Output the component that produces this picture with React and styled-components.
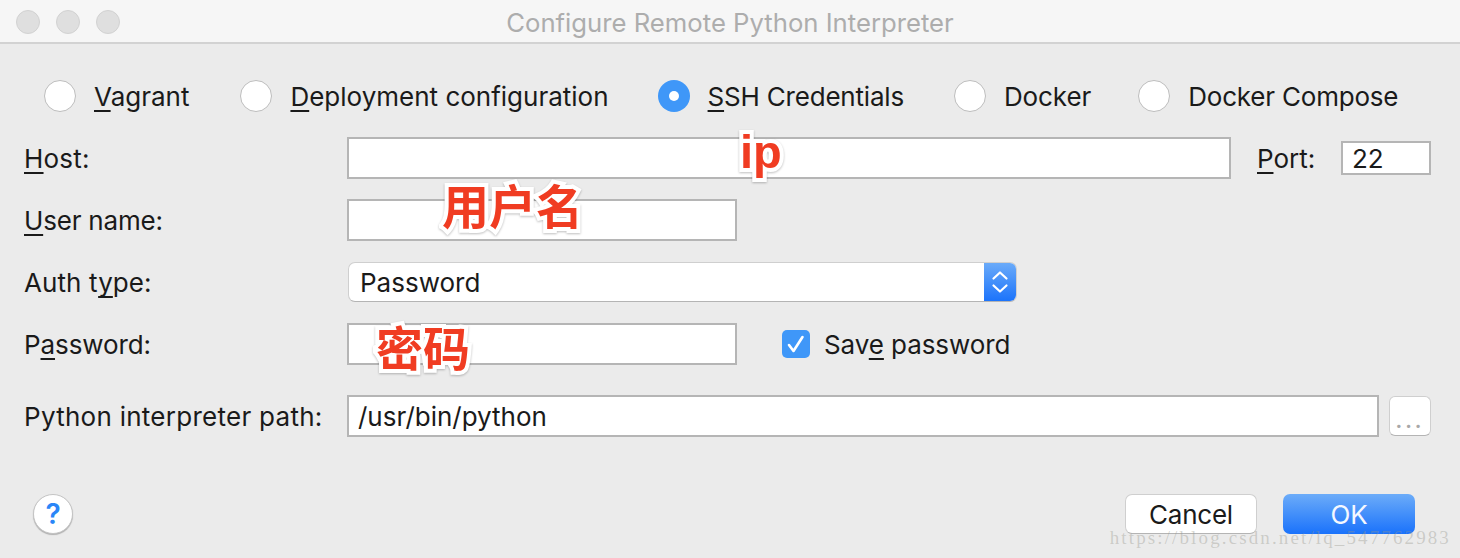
import React from 'react'
import styled, { createGlobalStyle } from 'styled-components'

const GlobalStyle = createGlobalStyle`
  html, body {
    margin: 0;
    padding: 0;
    background: #ebebeb;
  }
  body {
    font-family: Inter, "Noto Sans", "Liberation Sans", sans-serif;
    color: #1a1a1a;
    -webkit-font-smoothing: antialiased;
  }
`

const App = () => (
  <Dialog>
    <GlobalStyle />
    <TitleBar>
      <Lights>
        <Light />
        <Light />
        <Light />
      </Lights>
      <Title>Configure Remote Python Interpreter</Title>
    </TitleBar>
    <Body>
      <RadioRow>
        <RadioItem $gap={51}>
          <Radio />
          <span><Mn>V</Mn>agrant</span>
        </RadioItem>
        <RadioItem $gap={49}>
          <Radio />
          <span><Mn>D</Mn>eployment configuration</span>
        </RadioItem>
        <RadioItem $gap={50} $spacing={-0.2}>
          <Radio $checked />
          <span><Mn>S</Mn>SH Credentials</span>
        </RadioItem>
        <RadioItem $gap={47} $spacing={-0.1}>
          <Radio />
          <span>Docker</span>
        </RadioItem>
        <RadioItem $spacing={-0.2}>
          <Radio />
          <span>Docker Compose</span>
        </RadioItem>
      </RadioRow>

      <Row $top={25}>
        <Label $spacing={0.2}><Mn>H</Mn>ost:</Label>
        <Field $width={884}>
          <Note $left={391} $top={-15} $size={47} $latin>ip</Note>
        </Field>
        <PortLabel><Mn>P</Mn>ort:</PortLabel>
        <PortField>22</PortField>
      </Row>

      <Row $top={20}>
        <Label $spacing={-0.2}><Mn>U</Mn>ser name:</Label>
        <Field $width={390}>
          <Note $left={93} $top={-25} $size={47}>用户名</Note>
        </Field>
      </Row>

      <Row $top={21}>
        <Label $spacing={0.1}>Auth t<Mn>y</Mn>pe:</Label>
        <Select>
          <span>Password</span>
          <SelectArrows>
            <svg width="20" height="28" viewBox="0 0 20 28" fill="none" stroke="#fff" strokeWidth="2.2" strokeLinecap="round" strokeLinejoin="round">
              <path d="M3.5 10.5 L10 4.5 L16.5 10.5" />
              <path d="M3.5 17.5 L10 23.5 L16.5 17.5" />
            </svg>
          </SelectArrows>
        </Select>
      </Row>

      <Row $top={21}>
        <Label $spacing={-0.1}>P<Mn>a</Mn>ssword:</Label>
        <Field $width={390}>
          <Note $left={27} $top={-7} $size={47}>密码</Note>
        </Field>
        <CheckBox>
          <svg width="20" height="20" viewBox="0 0 20 20" fill="none" stroke="#fff" strokeWidth="2.6" strokeLinecap="round" strokeLinejoin="round">
            <path d="M3 11 L7.5 17 L16.5 3" />
          </svg>
        </CheckBox>
        <CheckLabel>Sa<span>v</span><Mn>e</Mn> password</CheckLabel>
      </Row>

      <Row $top={30}>
        <Label $spacing={0.27}>Python interpreter path:</Label>
        <Field $width={1032}>/usr/bin/python</Field>
        <BrowseButton>...</BrowseButton>
      </Row>

      <Footer>
        <HelpButton>?</HelpButton>
        <FooterButtons>
          <Button>Cancel</Button>
          <Button $primary>OK</Button>
        </FooterButtons>
      </Footer>
    </Body>
    <Watermark>https://blog.csdn.net/lq_547762983</Watermark>
  </Dialog>
)

const Dialog = styled.div`
  position: relative;
  width: 1460px;
  height: 558px;
  overflow: hidden;
  background: #ebebeb;
`

const TitleBar = styled.div`
  position: relative;
  display: flex;
  align-items: center;
  justify-content: center;
  box-sizing: border-box;
  height: 44px;
  padding-top: 3px;
  background: #f6f6f6;
  border-bottom: 2px solid #d2d2d2;
`

const Lights = styled.div`
  position: absolute;
  left: 16px;
  top: 10px;
  display: flex;
  gap: 16px;
`

const Light = styled.div`
  box-sizing: border-box;
  width: 24px;
  height: 24px;
  border-radius: 50%;
  background: #dfdfdf;
  border: 1px solid #d2d2d2;
`

const Title = styled.div`
  font-size: 25.7px;
  color: #adadad;
`

const Body = styled.div`
  padding: 36px 29px 0 24px;
  font-size: 26px;
`

const RadioRow = styled.div`
  display: flex;
  align-items: center;
  height: 32px;
  padding-left: 20px;
`

const RadioItem = styled.div`
  display: flex;
  align-items: center;
  gap: 18px;
  margin-right: ${props => props.$gap || 0}px;
  letter-spacing: ${props => props.$spacing || 0}px;
`

const Radio = styled.div`
  box-sizing: border-box;
  width: 32px;
  height: 32px;
  border-radius: 50%;
  flex-shrink: 0;
  display: flex;
  align-items: center;
  justify-content: center;
  background: ${props => (props.$checked ? '#3f97f8' : '#fff')};
  border: ${props => (props.$checked ? 'none' : '1px solid #bdbdbd')};
  &::after {
    content: '';
    display: ${props => (props.$checked ? 'block' : 'none')};
    width: 10px;
    height: 10px;
    border-radius: 50%;
    background: #fff;
  }
`

const Mn = styled.span`
  text-decoration: underline;
  text-decoration-thickness: 2px;
  text-underline-offset: 4px;
  text-decoration-skip-ink: none;
`

const Row = styled.div`
  display: flex;
  align-items: center;
  margin-top: ${props => props.$top}px;
`

const Label = styled.div`
  width: 323px;
  flex-shrink: 0;
  white-space: nowrap;
  letter-spacing: ${props => props.$spacing || 0}px;
`

const Field = styled.div`
  position: relative;
  box-sizing: border-box;
  width: ${props => props.$width}px;
  height: 42px;
  line-height: 40px;
  padding-left: 9px;
  background: #fff;
  border: 2px solid #b5b5b5;
`

const Note = styled.span`
  position: absolute;
  left: ${props => props.$left}px;
  top: ${props => props.$top}px;
  font-family: ${props => (props.$latin ? '"Liberation Sans", Arial' : '"Noto Sans CJK SC"')}, sans-serif;
  font-size: ${props => props.$size}px;
  font-weight: 700;
  line-height: 1.2;
  white-space: nowrap;
  color: #f03c22;
  -webkit-text-stroke: 8px #fff;
  paint-order: stroke fill;
  filter: drop-shadow(0 1px 1px rgba(0, 0, 0, 0.25));
`

const PortLabel = styled.div`
  margin-left: 26px;
  width: 84px;
`

const PortField = styled.div`
  box-sizing: border-box;
  width: 90px;
  height: 34px;
  line-height: 32px;
  padding-left: 9px;
  background: #fff;
  border: 2px solid #b5b5b5;
`

const Select = styled.div`
  display: flex;
  align-items: center;
  justify-content: space-between;
  box-sizing: border-box;
  width: 669px;
  height: 40px;
  margin-left: 1px;
  padding-left: 11px;
  background: #fff;
  border-radius: 7px;
  overflow: hidden;
  border: 1px solid #cfcfcf;
  border-bottom-color: #b4b4b4;
`

const SelectArrows = styled.div`
  display: flex;
  align-items: center;
  justify-content: center;
  width: 32px;
  height: 40px;
  background: linear-gradient(#6cacf9, #1a72fb);
`

const CheckBox = styled.div`
  display: flex;
  align-items: center;
  justify-content: center;
  width: 28px;
  height: 28px;
  margin-left: 45px;
  border-radius: 5px;
  background: #3f97f8;
`

const CheckLabel = styled.div`
  margin-left: 14px;
  letter-spacing: -0.08px;
`

const BrowseButton = styled.div`
  display: flex;
  align-items: flex-end;
  justify-content: center;
  box-sizing: border-box;
  width: 42px;
  height: 40px;
  margin-left: 10px;
  padding-bottom: 4px;
  font-size: 20px;
  font-weight: 700;
  line-height: 1;
  letter-spacing: 3px;
  color: #a8a8a8;
  background: #fff;
  border-radius: 6px;
  border: 1px solid #cfcfcf;
  border-bottom-color: #b4b4b4;
`

const Footer = styled.div`
  display: flex;
  align-items: center;
  justify-content: space-between;
  margin-top: 57px;
  padding: 0 16px 0 9px;
`

const HelpButton = styled.div`
  display: flex;
  align-items: center;
  justify-content: center;
  box-sizing: border-box;
  width: 40px;
  height: 40px;
  border-radius: 50%;
  font-size: 28px;
  font-weight: 600;
  color: #2a86f7;
  background: #fff;
  border: 1px solid #c4c4c4;
  box-shadow: 0 1px 1px #b0b0b0;
`

const FooterButtons = styled.div`
  display: flex;
  gap: 26px;
`

const Button = styled.div`
  display: flex;
  align-items: center;
  justify-content: center;
  box-sizing: border-box;
  width: 132px;
  height: 40px;
  border-radius: 7px;
  letter-spacing: -0.25px;
  color: ${props => (props.$primary ? '#f4f8ff' : '#1a1a1a')};
  background: ${props => (props.$primary ? 'linear-gradient(#6cacf9, #1a72fb)' : '#fff')};
  border: ${props => (props.$primary ? 'none' : '1px solid #cfcfcf')};
  border-bottom-color: #b4b4b4;
`

const Watermark = styled.div`
  position: absolute;
  right: 9px;
  bottom: 9px;
  font-family: "Liberation Serif", serif;
  font-size: 19px;
  letter-spacing: 2.12px;
  color: rgba(150, 150, 140, 0.38);
`

export default App
